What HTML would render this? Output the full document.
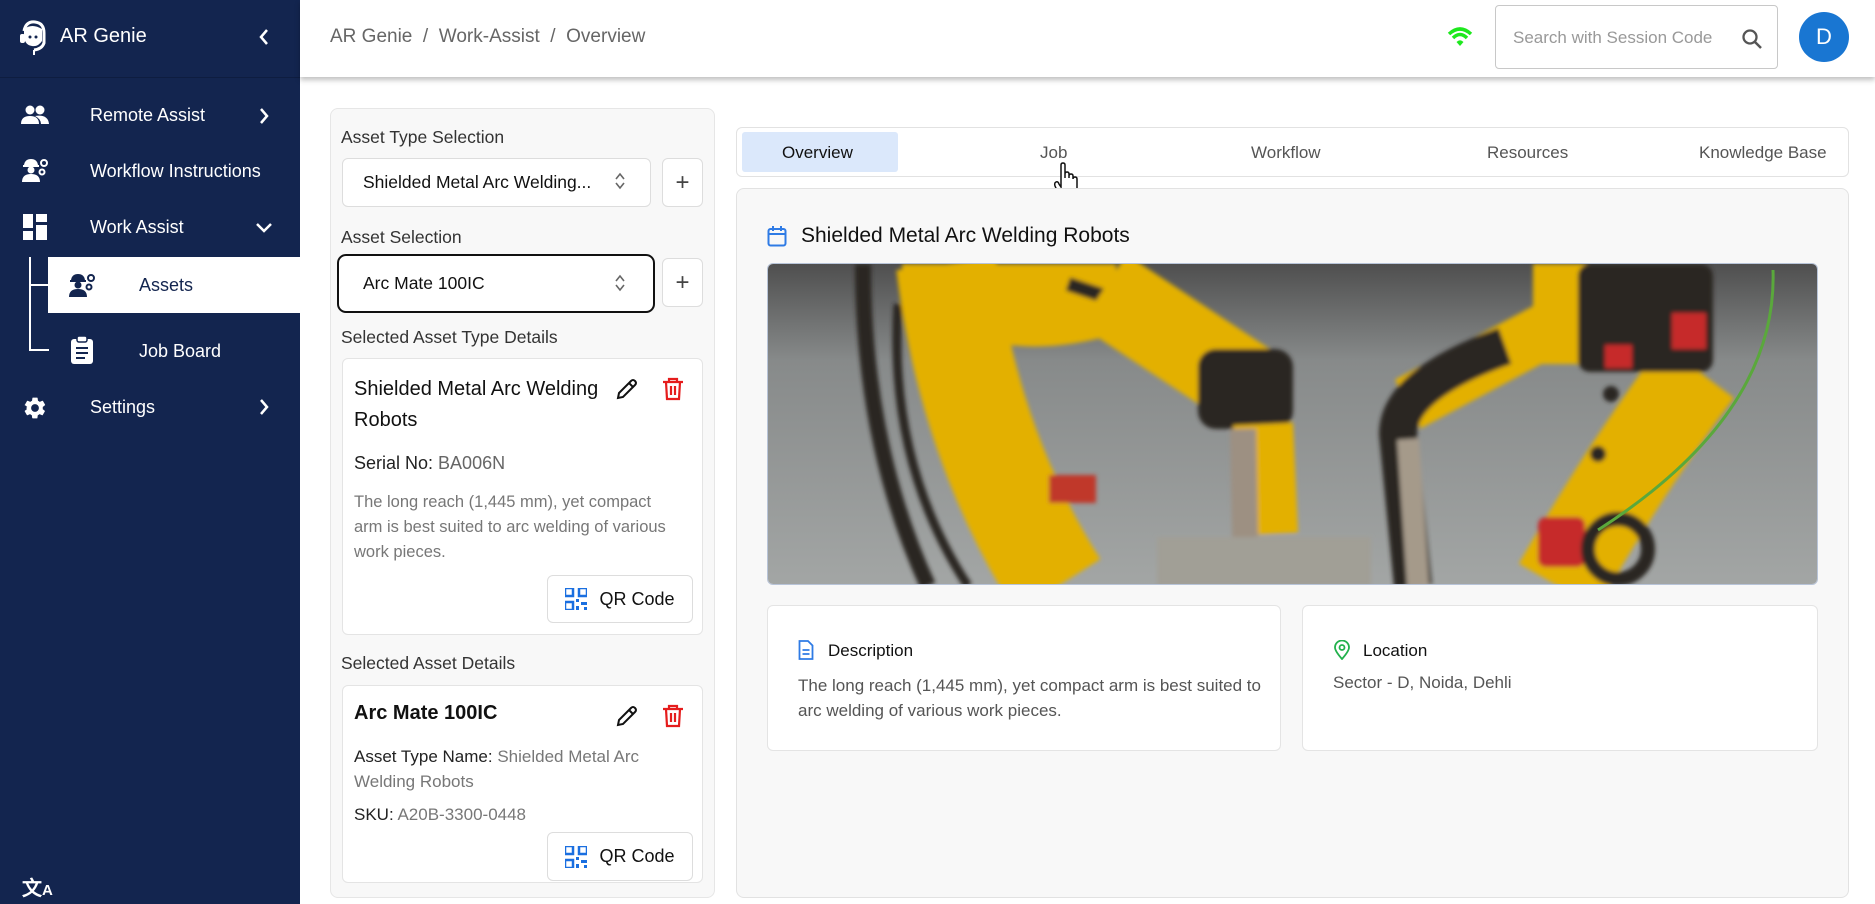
<!DOCTYPE html>
<html><head><meta charset="utf-8"><style>
*{box-sizing:border-box;margin:0;padding:0}
body{width:1875px;height:904px;overflow:hidden;font-family:"Liberation Sans",sans-serif;background:#fff;position:relative;color:#111}
.abs{position:absolute}
#side{left:0;top:0;width:300px;height:904px;background:#13254f;color:#fff}
.mi{position:absolute;left:90px;font-size:18px;color:#fff}
.chev{position:absolute;left:258px}
#hdr{left:300px;top:0;width:1575px;height:77px;background:#fff;box-shadow:0 3px 5px rgba(0,0,0,.25)}
.lab{position:absolute;font-size:17.5px;color:#333}
.sel{position:absolute;background:#fff;border:1px solid #ddd;border-radius:6px;font-size:17.5px;padding-left:20px;display:flex;align-items:center}
.pb{position:absolute;background:#fff;border:1px solid #ddd;border-radius:6px;font-size:24px;color:#444;display:flex;align-items:center;justify-content:center}
.card{position:absolute;background:#fff;border:1px solid #e4e4e4;border-radius:6px}
.qr{position:absolute;background:#fff;border:1px solid #ddd;border-radius:6px;font-size:18px;display:flex;align-items:center;justify-content:center;gap:12px}
.tab{position:absolute;top:0;height:50px;display:flex;align-items:center;font-size:17px;color:#555}
</style></head><body>
<div id="side" class="abs">
  <svg class="abs" style="left:18px;top:19px" width="30" height="38" viewBox="0 0 30 38"><path d="M6 12 Q8 2 17 3 Q26 4 26 14 L26 24 Q24 30 16 31" fill="none" stroke="#fff" stroke-width="3"/><path d="M6 10 Q14 4 24 10 L24 22 Q20 28 14 27 Q7 26 6 18Z" fill="#fff"/><rect x="2" y="15" width="5" height="9" rx="2" fill="#fff"/><circle cx="12" cy="18" r="1.5" fill="#13254f"/><circle cx="18" cy="18" r="1.5" fill="#13254f"/><path d="M16 31 L16 36" stroke="#fff" stroke-width="2"/></svg>
  <div class="abs" style="left:60px;top:25px;font-size:20px">AR Genie</div>
  <svg class="abs chev" style="top:27px;left:258px" width="12" height="20" viewBox="0 0 12 20"><path d="M9 3 L3 10 L9 17" fill="none" stroke="#fff" stroke-width="2.5"/></svg>
  <div style="position:absolute;left:0;top:77px;width:300px;border-top:1px solid #0e1d40"></div>
  <svg class="abs" style="left:21px;top:104px" width="28" height="22" viewBox="0 0 28 22"><circle cx="9" cy="6" r="4.5" fill="#fff"/><circle cx="19" cy="6" r="4.5" fill="#fff"/><path d="M0 20 Q0 12 9 12 Q18 12 18 20Z M14 12 Q27 10 28 20 L20 20 Q20 15 14 12Z" fill="#fff"/></svg>
  <div class="mi" style="top:105px">Remote Assist</div>
  <svg class="abs chev" style="top:106px" width="12" height="20" viewBox="0 0 12 20"><path d="M3 3 L9 10 L3 17" fill="none" stroke="#fff" stroke-width="2.5"/></svg>
  <svg class="abs" style="left:21px;top:157px" width="28" height="26" viewBox="0 0 28 26"><path d="M3 8 Q4 2 10 2 Q16 2 17 8Z" fill="#fff"/><rect x="2" y="8" width="16" height="2" fill="#fff"/><circle cx="10" cy="13" r="3.5" fill="#fff"/><path d="M1 25 Q1 17 10 17 Q19 17 19 25Z" fill="#fff"/><circle cx="23" cy="6" r="3" fill="none" stroke="#fff" stroke-width="2"/><circle cx="21" cy="15" r="2.5" fill="none" stroke="#fff" stroke-width="2"/></svg>
  <div class="mi" style="top:161px">Workflow Instructions</div>
  <svg class="abs" style="left:23px;top:214px" width="24" height="26" viewBox="0 0 24 26"><rect x="0" y="0" width="10" height="14" fill="#fff"/><rect x="13" y="0" width="11" height="8" fill="#fff"/><rect x="0" y="17" width="10" height="9" fill="#fff"/><rect x="13" y="11" width="11" height="15" fill="#fff"/></svg>
  <div class="mi" style="top:217px">Work Assist</div>
  <svg class="abs chev" style="top:222px;left:255px" width="18" height="12" viewBox="0 0 18 12"><path d="M2 2 L9 9 L16 2" fill="none" stroke="#fff" stroke-width="2.5"/></svg>
  <div class="abs" style="left:29px;top:257px;width:2px;height:94px;background:#fff"></div>
  <div class="abs" style="left:29px;top:349px;width:20px;height:2px;background:#fff"></div>
  <div class="abs" style="left:29px;top:284px;width:20px;height:2px;background:#fff"></div>
  <div class="abs" style="left:48px;top:257px;width:252px;height:56px;background:#fff"></div>
  <svg class="abs" style="left:68px;top:272px" width="28" height="26" viewBox="0 0 28 26"><path d="M3 8 Q4 2 10 2 Q16 2 17 8Z" fill="#13254f"/><rect x="2" y="8" width="16" height="2" fill="#13254f"/><circle cx="10" cy="13" r="3.5" fill="#13254f"/><path d="M1 25 Q1 17 10 17 Q19 17 19 25Z" fill="#13254f"/><circle cx="23" cy="6" r="3" fill="none" stroke="#13254f" stroke-width="2"/><circle cx="21" cy="15" r="2.5" fill="none" stroke="#13254f" stroke-width="2"/></svg>
  <div class="abs" style="left:139px;top:275px;font-size:18px;color:#13254f">Assets</div>
  <svg class="abs" style="left:71px;top:336px" width="22" height="28" viewBox="0 0 22 28"><rect x="0" y="3" width="22" height="25" rx="3" fill="#fff"/><rect x="6" y="0" width="10" height="6" rx="2" fill="#fff" stroke="#13254f" stroke-width="1.5"/><rect x="5" y="11" width="12" height="2" fill="#13254f"/><rect x="5" y="16" width="12" height="2" fill="#13254f"/><rect x="5" y="21" width="9" height="2" fill="#13254f"/></svg>
  <div class="abs" style="left:139px;top:341px;font-size:18px">Job Board</div>
  <svg class="abs" style="left:22px;top:395px" width="26" height="26" viewBox="0 0 24 24"><path fill="#fff" d="M19.14 12.94c.04-.3.06-.61.06-.94s-.02-.64-.07-.94l2.03-1.58a.49.49 0 0 0 .12-.61l-1.920-3.32a.49.49 0 0 0-.59-.22l-2.39.96c-.5-.38-1.03-.7-1.62-.94l-.36-2.54a.48.48 0 0 0-.48-.41h-3.84c-.24 0-.43.17-.47.41l-.36 2.54c-.59.24-1.13.57-1.62.94l-2.39-.96a.48.48 0 0 0-.59.22L2.74 8.87c-.12.21-.8.47.12.61l2.03 1.58c-.5.3-.9.63-.9.94s.2.64.7.94l-2.03 1.58a.49.49 0 0 0-.12.61l1.92 3.32c.12.22.37.29.59.22l2.39-.96c.5.38 1.030.7 1.620.94l.36 2.54c.5.24.24.41.48.41h3.84c.24 0 .44-.17.47-.41l.36-2.54c.59-.24 1.13-.56 1.62-.94l2.39.96c.22.08.47 0 .59-.22l1.92-3.32a.49.49 0 0 0-.12-.61l-2.01-1.58zM12 15.6A3.6 3.6 0 1 1 12 8.4a3.6 3.6 0 0 1 0 7.2z"/></svg>
  <div class="mi" style="top:397px">Settings</div>
  <svg class="abs chev" style="top:397px" width="12" height="20" viewBox="0 0 12 20"><path d="M3 3 L9 10 L3 17" fill="none" stroke="#fff" stroke-width="2.5"/></svg>
  <div class="abs" style="left:22px;top:872px;font-size:20px;font-weight:bold">文<span style="font-size:15px">A</span></div>
</div>
<div id="hdr" class="abs">
  <div class="abs" style="left:30px;top:26px;font-size:19px;color:#666">AR Genie &nbsp;/ &nbsp;Work-Assist &nbsp;/ &nbsp;Overview</div>
  <svg class="abs" style="left:1147px;top:26px" width="26" height="22" viewBox="0 0 26 22"><path d="M2 8 Q13 -2 24 8" fill="none" stroke="#1ee81e" stroke-width="3.5"/><path d="M6 12 Q13 5 20 12" fill="none" stroke="#1ee81e" stroke-width="3.5"/><path d="M9.5 16 Q13 12.5 16.5 16 L13 20Z" fill="#1ee81e"/></svg>
  <div class="abs" style="left:1195px;top:5px;width:283px;height:64px;border:1px solid #c8c8c8;border-radius:4px;background:#fff">
    <div class="abs" style="left:17px;top:22px;font-size:17px;color:#999">Search with Session Code</div>
    <svg class="abs" style="left:245px;top:22px" width="22" height="22" viewBox="0 0 22 22"><circle cx="9" cy="9" r="6.5" fill="none" stroke="#555" stroke-width="2.3"/><path d="M14 14 L20 20" stroke="#555" stroke-width="2.5"/></svg>
  </div>
  <div class="abs" style="left:1499px;top:12px;width:50px;height:50px;border-radius:50%;background:#1976d2;color:#fff;font-size:22px;display:flex;align-items:center;justify-content:center">D</div>
</div>
<!-- left panel -->
<div class="abs" style="left:330px;top:108px;width:385px;height:790px;background:#f8f8f8;border:1px solid #e6e6e6;border-radius:8px"></div>
<div class="lab" style="left:341px;top:127px">Asset Type Selection</div>
<div class="sel" style="left:342px;top:158px;width:309px;height:49px">Shielded Metal Arc Welding...</div>
<div class="pb" style="left:662px;top:158px;width:41px;height:49px">+</div>
<div class="lab" style="left:341px;top:227px">Asset Selection</div>
<div class="sel" style="left:337px;top:254px;width:318px;height:59px;border:2.5px solid #111;border-radius:9px;padding-left:24px">Arc Mate 100IC</div>
<div class="pb" style="left:662px;top:258px;width:41px;height:49px">+</div>
<svg class="abs" style="left:614px;top:171px" width="12" height="20" viewBox="0 0 12 20"><path d="M2 8 L6 3 L10 8 M2 12 L6 17 L10 12" fill="none" stroke="#666" stroke-width="1.6"/></svg>
<svg class="abs" style="left:614px;top:273px" width="12" height="20" viewBox="0 0 12 20"><path d="M2 8 L6 3 L10 8 M2 12 L6 17 L10 12" fill="none" stroke="#666" stroke-width="1.6"/></svg>
<div class="lab" style="left:341px;top:327px">Selected Asset Type Details</div>
<div class="card" style="left:342px;top:358px;width:361px;height:277px">
  <div class="abs" style="left:11px;top:15px;font-size:20px;line-height:31px;width:260px;color:#111">Shielded Metal Arc Welding Robots</div>
  <div class="abs" style="left:11px;top:94px;font-size:18px;color:#222">Serial No: <span style="color:#666">BA006N</span></div>
  <div class="abs" style="left:11px;top:131px;font-size:16.5px;line-height:25px;color:#777;width:330px">The long reach (1,445 mm), yet compact arm is best suited to arc welding of various work pieces.</div>
</div>
<div class="qr" style="left:547px;top:575px;width:146px;height:48px"><svg width="22" height="22" viewBox="0 0 22 22" fill="#1a6fe0"><rect x="0" y="0" width="8" height="8" fill="none" stroke="#1a6fe0" stroke-width="2.5"/><rect x="14" y="0" width="8" height="8" fill="none" stroke="#1a6fe0" stroke-width="2.5"/><rect x="0" y="14" width="8" height="8" fill="none" stroke="#1a6fe0" stroke-width="2.5"/><rect x="11" y="11" width="3" height="3"/><rect x="16" y="14" width="6" height="3"/><rect x="11" y="18" width="3" height="4"/><rect x="19" y="19" width="3" height="3"/></svg>QR Code</div>
<div class="lab" style="left:341px;top:653px">Selected Asset Details</div>
<div class="card" style="left:342px;top:685px;width:361px;height:198px">
  <div class="abs" style="left:11px;top:16px;font-size:20px;font-weight:bold;color:#111">Arc Mate 100IC</div>
  <div class="abs" style="left:11px;top:58px;font-size:17px;line-height:25px;color:#222;width:300px">Asset Type Name: <span style="color:#777">Shielded Metal Arc Welding Robots</span></div>
  <div class="abs" style="left:11px;top:119px;font-size:17px;color:#222">SKU: <span style="color:#777">A20B-3300-0448</span></div>
</div>
<div class="qr" style="left:547px;top:832px;width:146px;height:49px"><svg width="22" height="22" viewBox="0 0 22 22" fill="#1a6fe0"><rect x="0" y="0" width="8" height="8" fill="none" stroke="#1a6fe0" stroke-width="2.5"/><rect x="14" y="0" width="8" height="8" fill="none" stroke="#1a6fe0" stroke-width="2.5"/><rect x="0" y="14" width="8" height="8" fill="none" stroke="#1a6fe0" stroke-width="2.5"/><rect x="11" y="11" width="3" height="3"/><rect x="16" y="14" width="6" height="3"/><rect x="11" y="18" width="3" height="4"/><rect x="19" y="19" width="3" height="3"/></svg>QR Code</div>
<svg class="abs" style="left:615px;top:377px" width="24" height="24" viewBox="0 0 24 24"><path d="M3 21 L4 16 L16 4 Q18 2 20 4 Q22 6 20 8 L8 20Z M14 6 L18 10" fill="none" stroke="#111" stroke-width="2"/></svg>
<svg class="abs" style="left:662px;top:377px" width="22" height="24" viewBox="0 0 22 24"><path d="M1 5 H21 M7 5 V2 H15 V5 M4 5 L5 22 H17 L18 5 M9 9 V18 M13 9 V18" fill="none" stroke="#e51c1c" stroke-width="2.2"/></svg>
<svg class="abs" style="left:615px;top:704px" width="24" height="24" viewBox="0 0 24 24"><path d="M3 21 L4 16 L16 4 Q18 2 20 4 Q22 6 20 8 L8 20Z M14 6 L18 10" fill="none" stroke="#111" stroke-width="2"/></svg>
<svg class="abs" style="left:662px;top:704px" width="22" height="24" viewBox="0 0 22 24"><path d="M1 5 H21 M7 5 V2 H15 V5 M4 5 L5 22 H17 L18 5 M9 9 V18 M13 9 V18" fill="none" stroke="#e51c1c" stroke-width="2.2"/></svg>
<!-- tabs -->
<div class="abs" style="left:736px;top:127px;width:1113px;height:50px;border:1px solid #e2e2e2;border-radius:6px;background:#fff">
  <div class="abs" style="left:5px;top:4px;width:156px;height:40px;background:#dbe8fb;border-radius:3px"></div>
  <div class="tab" style="left:45px;color:#111">Overview</div>
  <div class="tab" style="left:303px">Job</div>
  <div class="tab" style="left:514px">Workflow</div>
  <div class="tab" style="left:750px">Resources</div>
  <div class="tab" style="left:962px">Knowledge Base</div>
</div>
<svg class="abs" style="left:1053px;top:162px" width="30" height="40" viewBox="0 0 30 40"><path d="M8 3 Q8 1 10 1 Q12 1 12 3 L12 16 L12 12 Q12 10 14 10 Q16 10 16 12 L16 16 L16 14 Q16 12 18 12 Q20 12 20 14 L20 17 Q20 15 22 15 Q24 15 24 17 L24 27 Q24 33 20 36 L20 39 L9 39 L9 36 Q5 31 2 24 Q1 21 3 20 Q5 19 6 22 L8 25Z" fill="#fff" stroke="#111" stroke-width="1.5"/></svg>
<!-- content card -->
<div class="abs" style="left:736px;top:188px;width:1113px;height:710px;background:#f8f8f8;border:1px solid #e2e2e2;border-radius:8px"></div>
<svg class="abs" style="left:767px;top:225px" width="20" height="22" viewBox="0 0 20 22"><rect x="1.5" y="4" width="17" height="16.5" rx="2" fill="none" stroke="#2f7be5" stroke-width="2"/><path d="M1.5 9 H18.5 M6 1 V6 M14 1 V6" stroke="#2f7be5" stroke-width="2"/></svg>
<div class="abs" style="left:801px;top:224px;font-size:21px;color:#111">Shielded Metal Arc Welding Robots</div>
<div class="abs" style="left:767px;top:263px;width:1051px;height:322px;border-radius:6px;overflow:hidden;border:1px solid #b8c4d8">
<svg width="1051" height="322" viewBox="0 0 1051 322">
<defs><linearGradient id="bg" x1="0" x2="0" y1="0" y2="1"><stop offset="0" stop-color="#4f4f4f"/><stop offset=".3" stop-color="#878a8a"/><stop offset="1" stop-color="#a3a6a5"/></linearGradient>
<filter id="bl"><feGaussianBlur stdDeviation="2"/></filter></defs>
<rect width="1051" height="322" fill="url(#bg)"/>
<g filter="url(#bl)">
<path d="M95 0 Q95 180 160 322" fill="none" stroke="#2a2522" stroke-width="16"/>
<path d="M130 40 Q120 200 200 322" fill="none" stroke="#2a2522" stroke-width="9"/>
<path d="M178 0 Q200 180 290 322" fill="none" stroke="#e3b000" stroke-width="100"/>
<path d="M134 0 L348 0 L348 70 Q260 95 200 70 Q150 60 134 30Z" fill="#e3b000"/>
<path d="M300 20 L360 40" stroke="#2a2522" stroke-width="14"/>
<path d="M335 26 L482 123" fill="none" stroke="#e3b000" stroke-width="85"/>
<rect x="430" y="85" width="95" height="80" rx="18" fill="#2a2522"/>
<path d="M495 160 L500 270" fill="none" stroke="#e3b000" stroke-width="60"/>
<path d="M475 165 L478 322" fill="none" stroke="#9d9082" stroke-width="26"/>
<rect x="389" y="273" width="214" height="49" fill="#a19f96"/>
<rect x="281" y="211" width="47" height="28" fill="#c0392b"/>
<path d="M930 107 Q860 200 790 322" fill="none" stroke="#e3b000" stroke-width="90"/>
<path d="M800 0 L800 100" stroke="#e3b000" stroke-width="70"/>
<path d="M790 60 L640 140" fill="none" stroke="#e3b000" stroke-width="55"/>
<path d="M737 82 Q630 120 630 170 L645 322" fill="none" stroke="#2a2522" stroke-width="38"/>
<path d="M640 175 L650 322" fill="none" stroke="#a59a8a" stroke-width="22"/>
<rect x="810" y="0" width="135" height="108" rx="12" fill="#2a2522"/>
<rect x="904" y="49" width="34" height="36" fill="#c62b2b"/>
<rect x="837" y="81" width="27" height="23" fill="#c62b2b"/>
<rect x="770" y="253" width="47" height="50" rx="8" fill="#c62b2b"/>
<circle cx="850" cy="285" r="30" fill="none" stroke="#2a2522" stroke-width="14"/>
<circle cx="843" cy="130" r="8" fill="#2a2522"/><circle cx="830" cy="190" r="8" fill="#2a2522"/>
</g>
<path d="M1005 6 Q1010 150 830 266" fill="none" stroke="#5aa83c" stroke-width="3"/>
</svg></div>
<div class="card" style="left:767px;top:605px;width:514px;height:146px">
  <svg class="abs" style="left:30px;top:34px" width="16" height="20" viewBox="0 0 16 20"><path d="M1.5 1 H10 L14.5 5.5 V19 H1.5Z M4.5 10 H11.5 M4.5 14 H11.5" fill="none" stroke="#2f7be5" stroke-width="1.8"/></svg>
  <div class="abs" style="left:60px;top:35px;font-size:17px;color:#111">Description</div>
  <div class="abs" style="left:30px;top:67px;font-size:17px;line-height:25px;color:#555;width:470px">The long reach (1,445 mm), yet compact arm is best suited to arc welding of various work pieces.</div>
</div>
<div class="card" style="left:1302px;top:605px;width:516px;height:146px">
  <svg class="abs" style="left:31px;top:34px" width="16" height="20" viewBox="0 0 16 20"><path d="M8 19 Q1 11 1 7.5 A7 7 0 0 1 15 7.5 Q15 11 8 19Z" fill="none" stroke="#22b14c" stroke-width="1.8"/><circle cx="8" cy="7.5" r="2.5" fill="none" stroke="#22b14c" stroke-width="1.8"/></svg>
  <div class="abs" style="left:60px;top:35px;font-size:17px;color:#111">Location</div>
  <div class="abs" style="left:30px;top:67px;font-size:17px;color:#555">Sector - D, Noida, Dehli</div>
</div>
</body></html>
